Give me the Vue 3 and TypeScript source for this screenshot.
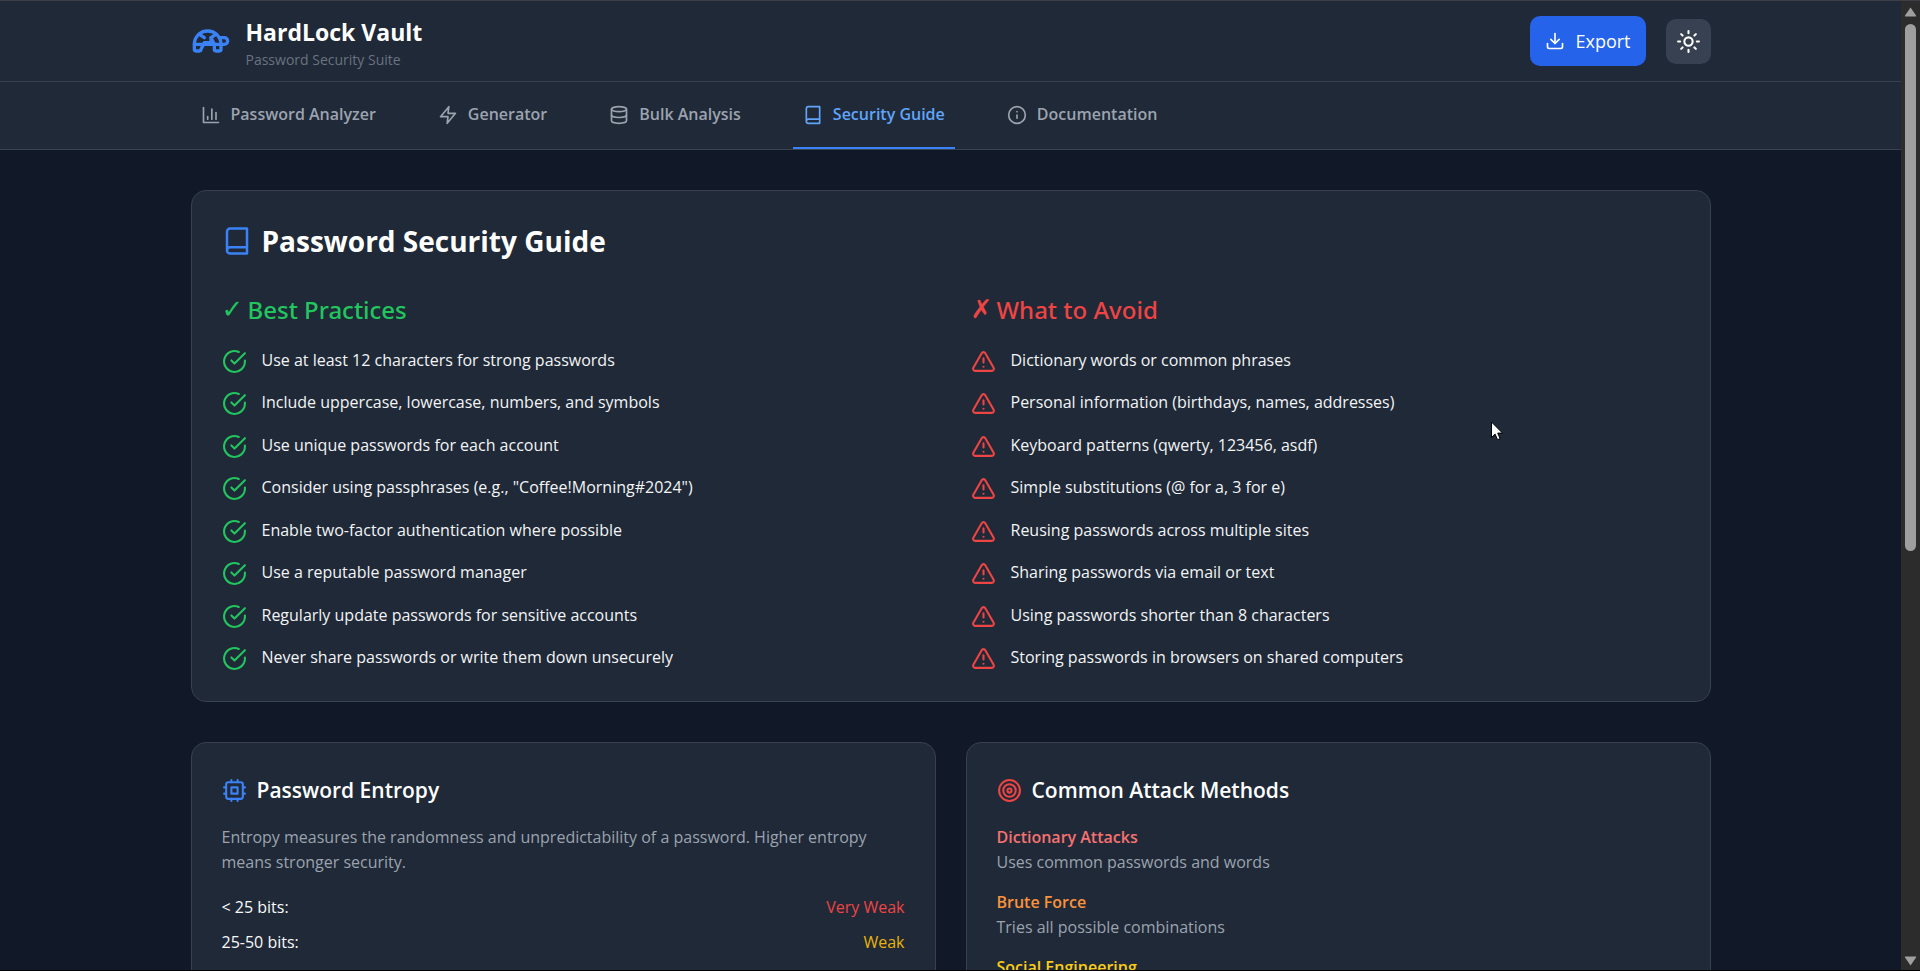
<script setup lang="ts">
import { ref } from 'vue'

type IconName =
  | 'turtle' | 'chart' | 'bolt' | 'database' | 'book' | 'info'
  | 'download' | 'sun' | 'check' | 'alert' | 'cpu' | 'target'

const icons: Record<IconName, string[]> = {
  turtle: [
    'm12 10 2 4v3a1 1 0 0 0 1 1h2a1 1 0 0 0 1-1v-3a8 8 0 1 0-16 0v3a1 1 0 0 0 1 1h2a1 1 0 0 0 1-1l2-4h4Z',
    'M4.82 7.9 8 10',
    'M15.18 7.9 12 10',
    'M16.93 10H20a2 2 0 0 1 0 4H2',
  ],
  chart: ['M3 3v18h18', 'M18 17V9', 'M13 17V5', 'M8 17v-3'],
  bolt: ['M13 2 3 14h9l-1 8 10-12h-9l1-8z'],
  database: [
    'M3 5a9 3 0 1 0 18 0a9 3 0 1 0-18 0',
    'M21 12c0 1.66-4 3-9 3s-9-1.34-9-3',
    'M3 5v14c0 1.66 4 3 9 3s9-1.34 9-3V5',
  ],
  book: ['M4 19.5v-15A2.5 2.5 0 0 1 6.5 2H20v20H6.5a2.5 2.5 0 0 1 0-5H20'],
  info: ['M2 12a10 10 0 1 0 20 0a10 10 0 1 0-20 0', 'M12 16v-4', 'M12 8h.01'],
  download: ['M21 15v4a2 2 0 0 1-2 2H5a2 2 0 0 1-2-2v-4', 'M7 10l5 5 5-5', 'M12 15V3'],
  sun: [
    'M8 12a4 4 0 1 0 8 0a4 4 0 1 0-8 0',
    'M12 2v2', 'M12 20v2', 'm4.93 4.93 1.41 1.41', 'm17.66 17.66 1.41 1.41',
    'M2 12h2', 'M20 12h2', 'm6.34 17.66-1.41 1.41', 'm19.07 4.93-1.41 1.41',
  ],
  check: ['M22 11.08V12a10 10 0 1 1-5.93-9.14', 'm9 11 3 3L22 4'],
  alert: [
    'm21.73 18-8-14a2 2 0 0 0-3.48 0l-8 14A2 2 0 0 0 4 21h16a2 2 0 0 0 1.73-3Z',
    'M12 9v4', 'M12 17h.01',
  ],
  cpu: [
    'M6 4h12a2 2 0 0 1 2 2v12a2 2 0 0 1-2 2H6a2 2 0 0 1-2-2V6a2 2 0 0 1 2-2Z',
    'M9 9h6v6H9Z',
    'M15 2v2', 'M15 20v2', 'M2 15h2', 'M2 9h2', 'M20 15h2', 'M20 9h2', 'M9 2v2', 'M9 20v2',
  ],
  target: [
    'M2 12a10 10 0 1 0 20 0a10 10 0 1 0-20 0',
    'M6 12a6 6 0 1 0 12 0a6 6 0 1 0-12 0',
    'M10 12a2 2 0 1 0 4 0a2 2 0 1 0-4 0',
  ],
}

const tabs: { label: string; icon: IconName }[] = [
  { label: 'Password Analyzer', icon: 'chart' },
  { label: 'Generator', icon: 'bolt' },
  { label: 'Bulk Analysis', icon: 'database' },
  { label: 'Security Guide', icon: 'book' },
  { label: 'Documentation', icon: 'info' },
]
const active = ref('Security Guide')

const columns: { title: string; mark: string; tone: string; icon: IconName; items: string[] }[] = [
  {
    title: 'Best Practices',
    mark: '✓',
    tone: 'good',
    icon: 'check',
    items: [
      'Use at least 12 characters for strong passwords',
      'Include uppercase, lowercase, numbers, and symbols',
      'Use unique passwords for each account',
      'Consider using passphrases (e.g., "Coffee!Morning#2024")',
      'Enable two-factor authentication where possible',
      'Use a reputable password manager',
      'Regularly update passwords for sensitive accounts',
      'Never share passwords or write them down unsecurely',
    ],
  },
  {
    title: 'What to Avoid',
    mark: '✗',
    tone: 'bad',
    icon: 'alert',
    items: [
      'Dictionary words or common phrases',
      'Personal information (birthdays, names, addresses)',
      'Keyboard patterns (qwerty, 123456, asdf)',
      'Simple substitutions (@ for a, 3 for e)',
      'Reusing passwords across multiple sites',
      'Sharing passwords via email or text',
      'Using passwords shorter than 8 characters',
      'Storing passwords in browsers on shared computers',
    ],
  },
]

const levels = [
  { range: '< 25 bits:', label: 'Very Weak', tone: 'red' },
  { range: '25-50 bits:', label: 'Weak', tone: 'amber' },
  { range: '50-75 bits:', label: 'Moderate', tone: 'blue' },
]

const attacks = [
  { name: 'Dictionary Attacks', text: 'Uses common passwords and words', tone: 'rose' },
  { name: 'Brute Force', text: 'Tries all possible combinations', tone: 'orange' },
  { name: 'Social Engineering', text: '', tone: 'yellow' },
]
</script>

<template>
  <div class="app">
    <div class="pane">
      <header class="header">
        <div class="container header-row">
          <div class="brand">
            <svg class="icon logo" viewBox="0 0 24 24" aria-hidden="true">
              <path v-for="d in icons.turtle" :key="d" :d="d" />
            </svg>
            <div>
              <p class="brand-name">HardLock Vault</p>
              <p class="brand-sub">Password Security Suite</p>
            </div>
          </div>
          <div class="actions">
            <button type="button" class="export">
              <svg class="icon small" viewBox="0 0 24 24" aria-hidden="true">
                <path v-for="d in icons.download" :key="d" :d="d" />
              </svg>
              <span>Export</span>
            </button>
            <button type="button" class="theme" aria-label="Toggle theme">
              <svg class="icon medium" viewBox="0 0 24 24" aria-hidden="true">
                <path v-for="d in icons.sun" :key="d" :d="d" />
              </svg>
            </button>
          </div>
        </div>
      </header>

      <nav class="nav">
        <div class="container tabs">
          <button
            v-for="tab in tabs"
            :key="tab.label"
            type="button"
            class="tab"
            :class="{ active: tab.label === active }"
            @click="active = tab.label"
          >
            <svg class="icon small" viewBox="0 0 24 24" aria-hidden="true">
              <path v-for="d in icons[tab.icon]" :key="d" :d="d" />
            </svg>
            <span>{{ tab.label }}</span>
          </button>
        </div>
      </nav>

      <main class="container main">
        <section class="card">
          <h1 class="title">
            <svg class="icon large accent" viewBox="0 0 24 24" aria-hidden="true">
              <path v-for="d in icons.book" :key="d" :d="d" />
            </svg>
            <span>Password Security Guide</span>
          </h1>
          <div class="columns">
            <div v-for="col in columns" :key="col.title" :class="col.tone">
              <h2 class="column-title"><span class="mark">{{ col.mark }}</span>{{ col.title }}</h2>
              <ul class="list">
                <li v-for="item in col.items" :key="item" class="list-item">
                  <svg class="icon medium" viewBox="0 0 24 24" aria-hidden="true">
                    <path v-for="d in icons[col.icon]" :key="d" :d="d" />
                  </svg>
                  <span>{{ item }}</span>
                </li>
              </ul>
            </div>
          </div>
        </section>

        <div class="pair">
          <section class="card">
            <h2 class="card-title">
              <svg class="icon medium accent" viewBox="0 0 24 24" aria-hidden="true">
                <path v-for="d in icons.cpu" :key="d" :d="d" />
              </svg>
              <span>Password Entropy</span>
            </h2>
            <p class="muted">
              Entropy measures the randomness and unpredictability of a password. Higher entropy
              means stronger security.
            </p>
            <dl class="levels">
              <div v-for="level in levels" :key="level.range" class="level">
                <dt>{{ level.range }}</dt>
                <dd :class="level.tone">{{ level.label }}</dd>
              </div>
            </dl>
          </section>

          <section class="card">
            <h2 class="card-title">
              <svg class="icon medium red" viewBox="0 0 24 24" aria-hidden="true">
                <path v-for="d in icons.target" :key="d" :d="d" />
              </svg>
              <span>Common Attack Methods</span>
            </h2>
            <div class="attacks">
              <div v-for="attack in attacks" :key="attack.name">
                <h3 class="attack-name" :class="attack.tone">{{ attack.name }}</h3>
                <p v-if="attack.text" class="muted">{{ attack.text }}</p>
              </div>
            </div>
          </section>
        </div>
      </main>
    </div>

    <div class="scrollbar" aria-hidden="true">
      <svg class="arrow" viewBox="0 0 13 10"><path d="M6.5 0.5 12 8.5Q12.6 9.6 11.5 9.6H1.5Q0.4 9.6 1 8.5Z" /></svg>
      <div class="track"><div class="thumb"></div></div>
      <svg class="arrow" viewBox="0 0 13 10"><path d="M6.5 9.5 12 1.5Q12.6 0.4 11.5 0.4H1.5Q0.4 0.4 1 1.5Z" /></svg>
    </div>

    <svg class="pointer" viewBox="0 0 12 20" aria-hidden="true">
      <path d="M0.5 1v15.5l3.6-3.4 2.4 5.6 2.6-1.1-2.4-5.5h4.8Z" />
    </svg>
  </div>
</template>

<style>
body {
  margin: 0;
  background: #111827;
}
</style>

<style scoped>
.app {
  position: relative;
  display: flex;
  box-sizing: border-box;
  height: 100vh;
  overflow: hidden;
  border-top: 1px solid #403e45;
  border-bottom: 1px solid #000;
  background: #111827;
  color: #f9fafb;
  font-family: "Open Sans", "Noto Sans", sans-serif;
  font-size: 16px;
  line-height: 25px;
}
.pane {
  flex: 1;
  min-width: 0;
  overflow-y: auto;
  scrollbar-width: none;
}
.container {
  max-width: 1520px;
  margin: 0 auto;
}
p, h1, h2, h3, ul, dl, dd {
  margin: 0;
  padding: 0;
}
button {
  border: 0;
  font: inherit;
  color: inherit;
  cursor: pointer;
}
.icon {
  flex: none;
  fill: none;
  stroke: currentColor;
  stroke-width: 2;
  stroke-linecap: round;
  stroke-linejoin: round;
}
.small { width: 20px; height: 20px; }
.medium { width: 25px; height: 25px; }
.large { width: 30px; height: 30px; }
.logo { width: 40px; height: 40px; color: #3b82f6; }
.accent { color: #3b82f6; }

.header, .nav {
  background: #1f2937;
  border-bottom: 1px solid #374151;
}
.header-row {
  display: flex;
  align-items: center;
  justify-content: space-between;
  height: 80px;
}
.brand {
  display: flex;
  align-items: center;
  gap: 15px;
}
.brand-name {
  font-size: 23px;
  font-weight: 700;
  line-height: 37px;
  color: #fff;
}
.brand-sub {
  font-size: 14px;
  line-height: 18px;
  color: #6b7280;
}
.actions {
  display: flex;
  align-items: center;
  gap: 20px;
}
.export {
  display: flex;
  align-items: center;
  gap: 10px;
  padding: 10px 15px;
  border-radius: 10px;
  background: #2563eb;
  color: #fff;
  font-size: 18px;
  line-height: 30px;
}
.theme {
  display: flex;
  padding: 10px;
  border-radius: 10px;
  background: #374151;
  color: #fff;
}
.tabs {
  display: flex;
  gap: 42px;
}
.tab {
  display: flex;
  align-items: center;
  gap: 10px;
  padding: 20px 10px;
  border-bottom: 2px solid transparent;
  background: none;
  color: #9ca3af;
  font-weight: 600;
}
.tab.active {
  border-bottom-color: #3b82f6;
  color: #60a5fa;
}

.main {
  display: flex;
  flex-direction: column;
  gap: 40px;
  padding: 40px 0;
}
.card {
  padding: 30px;
  border: 1px solid #374151;
  border-radius: 15px;
  background: #1f2937;
}
.title {
  display: flex;
  align-items: center;
  gap: 10px;
  margin-bottom: 30px;
  font-size: 28px;
  font-weight: 700;
  line-height: 40px;
  color: #fff;
}
.columns {
  display: grid;
  grid-template-columns: 1fr 1fr;
  gap: 40px;
}
.column-title {
  display: flex;
  margin-bottom: 18px;
  font-family: "Noto Sans", "Open Sans", sans-serif;
  font-size: 24px;
  font-weight: 500;
  line-height: 37px;
}
.mark {
  min-width: 26px;
  font-family: "DejaVu Sans", sans-serif;
  font-size: 26px;
  font-weight: 700;
}
.good { color: #22c55e; }
.bad { color: #ef4444; }
.list {
  display: flex;
  flex-direction: column;
  justify-content: space-between;
  min-height: 325px;
  list-style: none;
}
.list-item {
  display: flex;
  align-items: flex-start;
  gap: 15px;
}
.list-item .icon { margin-top: 3px; }
.list-item span {
  padding-top: 2px;
  color: #f3f4f6;
}

.pair {
  display: grid;
  grid-template-columns: 1fr 1fr;
  gap: 30px;
}
.card-title {
  display: flex;
  align-items: center;
  gap: 10px;
  margin-bottom: 17px;
  font-size: 21px;
  font-weight: 600;
  line-height: 35px;
  color: #fff;
}
.muted { color: #9ca3af; }
.levels {
  display: flex;
  flex-direction: column;
  gap: 10px;
  margin-top: 20px;
}
.level {
  display: flex;
  justify-content: space-between;
}
.attacks {
  display: flex;
  flex-direction: column;
  gap: 15px;
}
.attack-name {
  font-size: 16px;
  font-weight: 600;
}
.red { color: #ef4444; }
.amber { color: #eab308; }
.blue { color: #3b82f6; }
.rose { color: #f87171; }
.orange { color: #fb923c; }
.yellow { color: #facc15; }

.scrollbar {
  display: flex;
  flex: none;
  flex-direction: column;
  align-items: center;
  gap: 7px;
  box-sizing: border-box;
  width: 19px;
  padding: 6px 0 4px;
  background: #2c2c2c;
}
.arrow {
  width: 13px;
  height: 10px;
  fill: #9f9f9f;
}
.track {
  flex: 1;
  width: 11px;
}
.thumb {
  height: 57%;
  border-radius: 6px;
  background: #9f9f9f;
}
.pointer {
  position: absolute;
  top: 420px;
  left: 1491px;
  width: 12px;
  height: 20px;
  fill: #fff;
  stroke: #000;
  stroke-width: 1;
}
</style>
